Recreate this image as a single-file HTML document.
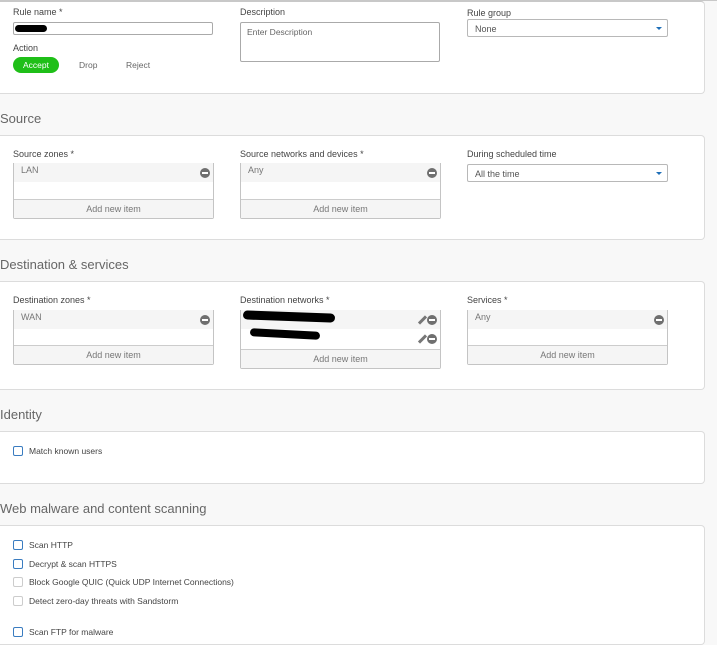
<!DOCTYPE html>
<html><head><style>
*{box-sizing:border-box;margin:0;padding:0}
body{width:717px;height:637px;background:#f8f8f8;font-family:"Liberation Sans",sans-serif;position:relative;overflow:hidden;color:#444}
.a{position:absolute}
.panel{position:absolute;left:0;width:705px;background:#fff;border:1px solid #dcdcdc;border-left:none;border-radius:0 4px 4px 0}
.h{position:absolute;left:0;font-size:13px;color:#666}
.l{position:absolute;font-size:9px;color:#444}
.sel{position:absolute;width:201px;height:18px;border:1px solid #b8b8b8;border-radius:2px;font-size:9px;color:#555;padding:4px 0 0 7px;background:#fff}
.sel:after{content:"";position:absolute;right:5px;top:7px;border:3px solid transparent;border-top:3px solid #1e6fb8}
.list{position:absolute;width:201px;border:1px solid #c4c4c4;border-top:none;border-radius:0 0 2px 2px;background:#fff}
.item{height:19px;background:#f5f5f5;font-size:9px;color:#777;padding:2px 0 0 7px;position:relative}
.add{position:absolute;left:0;right:0;bottom:0;height:19px;border-top:1px solid #ccc;background:#f5f5f5;text-align:center;font-size:9px;color:#777;padding-top:4px}
.min{position:absolute;right:3px;top:5px;width:10px;height:10px;border-radius:50%;background:#6f6f6f}
.min:after{content:"";position:absolute;left:2px;top:4px;width:6px;height:2px;background:#fff}
.pen{position:absolute;right:16px;top:5px;width:3px;height:10px;background:#777;transform:rotate(45deg)}
.cb{position:absolute;left:13px;width:10px;height:10px;border:1px solid #3a7cc0;border-radius:2px;background:#fff}
.cb.g{border-color:#ccc}
.ct{position:absolute;left:29px;font-size:8.5px;color:#444}
.blk{position:absolute;background:#000;border-radius:6px}
</style></head><body>
<div class="a" style="left:0;top:0;width:717px;height:2px;border-top:1px solid #c8c8c8"></div>
<div class="panel" style="top:1px;height:93px;border-top:1px solid #c8c8c8"></div>
<div class="l" style="left:13px;top:7px">Rule name *</div>
<div class="a" style="left:13px;top:22px;width:200px;height:13px;border:1px solid #aaa;border-radius:2px;background:#fff"></div>
<div class="blk" style="left:15px;top:25px;width:32px;height:7px"></div>
<div class="l" style="left:13px;top:43px">Action</div>
<div class="a" style="left:13px;top:57px;width:46px;height:16px;border-radius:8px;background:#1fbf18;color:#fff;font-size:8.5px;text-align:center;padding-top:3px">Accept</div>
<div class="l" style="left:79px;top:60px;color:#666;font-size:8.5px">Drop</div>
<div class="l" style="left:126px;top:60px;color:#666;font-size:8.5px">Reject</div>
<div class="l" style="left:240px;top:7px">Description</div>
<div class="a" style="left:240px;top:22px;width:200px;height:40px;border:1px solid #aaa;border-radius:2px;background:#fff;font-size:8.5px;color:#666;padding:4px 0 0 6px">Enter Description</div>
<div class="l" style="left:467px;top:8px">Rule group</div>
<div class="sel" style="left:467px;top:19px">None</div>

<div class="h" style="top:111px">Source</div>
<div class="panel" style="top:135px;height:105px"></div>
<div class="l" style="left:13px;top:149px">Source zones *</div>
<div class="list" style="left:13px;top:163px;height:56px"><div class="item">LAN<div class="min"></div></div><div class="add">Add new item</div></div>
<div class="l" style="left:240px;top:149px">Source networks and devices *</div>
<div class="list" style="left:240px;top:163px;height:56px"><div class="item">Any<div class="min"></div></div><div class="add">Add new item</div></div>
<div class="l" style="left:467px;top:149px">During scheduled time</div>
<div class="sel" style="left:467px;top:164px">All the time</div>

<div class="h" style="top:257px">Destination &amp; services</div>
<div class="panel" style="top:281px;height:109px"></div>
<div class="l" style="left:13px;top:295px">Destination zones *</div>
<div class="list" style="left:13px;top:310px;height:55px"><div class="item">WAN<div class="min"></div></div><div class="add">Add new item</div></div>
<div class="l" style="left:240px;top:295px">Destination networks *</div>
<div class="list" style="left:240px;top:310px;height:59px"><div class="item"><div class="pen"></div><div class="min"></div></div><div class="item" style="background:#fff"><div class="pen"></div><div class="min"></div></div><div class="add">Add new item</div></div>
<div class="blk" style="left:243px;top:312px;width:92px;height:9px;transform:rotate(2deg)"></div>
<div class="blk" style="left:250px;top:330px;width:70px;height:8px;transform:rotate(3deg)"></div>
<div class="l" style="left:467px;top:295px">Services *</div>
<div class="list" style="left:467px;top:310px;height:55px"><div class="item">Any<div class="min"></div></div><div class="add">Add new item</div></div>

<div class="h" style="top:407px">Identity</div>
<div class="panel" style="top:431px;height:53px"></div>
<div class="cb" style="top:446px"></div><div class="ct" style="top:446px">Match known users</div>

<div class="h" style="top:501px">Web malware and content scanning</div>
<div class="panel" style="top:525px;height:120px"></div>
<div class="cb" style="top:540px"></div><div class="ct" style="top:540px">Scan HTTP</div>
<div class="cb" style="top:559px"></div><div class="ct" style="top:559px">Decrypt &amp; scan HTTPS</div>
<div class="cb g" style="top:577px"></div><div class="ct" style="top:577px">Block Google QUIC (Quick UDP Internet Connections)</div>
<div class="cb g" style="top:596px"></div><div class="ct" style="top:596px">Detect zero-day threats with Sandstorm</div>
<div class="cb" style="top:627px"></div><div class="ct" style="top:627px">Scan FTP for malware</div>
</body></html>
